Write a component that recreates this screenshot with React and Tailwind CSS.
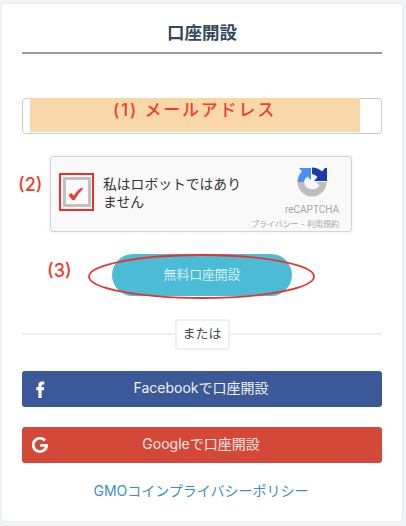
export default function App() {
  const font = { fontFamily: '"Inter", "Noto Sans CJK JP", sans-serif' };
  return (
    <div className="h-[526px] w-[406px] bg-[#f2f3f5] pt-[4px] pl-[2px] overflow-hidden" style={font}>
      <div className="w-[400px] h-[517px] bg-white rounded-[4px] shadow-[0_0_3px_rgba(0,0,0,0.08)] px-[20px] flex flex-col">
        <h1 className="h-[50px] border-b-2 border-[#999999] text-center text-[17.5px] leading-[24px] pt-[17px] font-bold text-[#34495e] shrink-0">
          口座開設
        </h1>

        <div className="relative mt-[44px] h-[36px] border border-[#cccccc] rounded-[4px] bg-white shrink-0">
          <div className="absolute left-[7px] top-[-1px] w-[330px] h-[34px] bg-[#f8d8a8] flex justify-center text-[#ee3d30] text-[17px] leading-[24px] font-medium tracking-[1.8px]">
            <span className="mr-[1px]">(1) メールアドレス</span>
          </div>
        </div>

        <div className="relative mt-[22px] ml-[28px] w-[302px] h-[76px] border border-[#d3d3d3] rounded-[3px] bg-[#f9f9f9] shadow-[0_0_4px_rgba(0,0,0,0.08)] flex shrink-0">
          <span className="absolute left-[-33px] top-[16px] text-[#ee3d30] text-[18px] font-medium leading-[24px]">(2)</span>
          <div className="mt-[16px] ml-[8px] w-[35px] h-[38px] border-2 border-[#ee2f2a] flex items-center justify-center shrink-0">
            <div className="w-[28px] h-[30px] border-[3px] border-[#c1c1c1] bg-[#fafafa] flex items-center justify-center">
              <svg className="mt-[3px] mr-[2px]" width="17" height="15" viewBox="0 0 17 16">
                <path d="M1 9.5 L4.2 7.5 L6.5 10.5 Q10 4.5 15.5 1.5 L16.5 3 Q11 8.5 7.5 15 L5 15 Z" fill="#ee3a30" />
              </svg>
            </div>
          </div>
          <div className="ml-[9px] mt-[18px] w-[142px] text-[13.8px] leading-[18px] text-[#333333]">
            私はロボットではありません
          </div>
          <div className="absolute right-[24px] top-[10px] w-[30px] h-[30px]">
            <svg width="30" height="30" viewBox="0 0 30 30">
              <path d="M0.5 15 A14.5 14.5 0 0 0 29.5 15 L19 15 L22.5 18.5 A8.5 8.5 0 0 1 7 15 Z" fill="#bdbdbd" />
              <path d="M0.5 15 A14.5 14.5 0 0 1 5 4.5 L2 1 H14 V13 L10.5 9.5 Q7.5 11.5 7 15 Z" fill="#4d90f5" />
              <path d="M15 0.5 A14.5 14.5 0 0 1 25 4.5 L28 1 H30 V14 H17 L20.5 10 A8.5 8.5 0 0 0 15 7 Z" fill="#1c3aa9" />
            </svg>
          </div>
          <div className="absolute right-[12px] top-[47px] text-[10px] leading-[12px] text-[#a6a6a6]" style={{ fontFamily: 'Roboto, sans-serif' }}>
            reCAPTCHA
          </div>
          <div className="absolute right-[12px] top-[62px] text-[8px] leading-[10px] text-[#a6a6a6]">
            プライバシー - 利用規約
          </div>
        </div>

        <div className="relative mt-[22px] h-[42px] shrink-0 flex justify-center">
          <span className="absolute left-[25px] top-[5px] text-[#ee3d30] text-[18px] font-medium leading-[24px]">(3)</span>
          <button className="w-[180px] h-[42px] rounded-[21px] bg-[#4cbbd6] text-[#d5f0f6] text-[12.8px]">
            無料口座開設
          </button>
          <svg className="absolute left-[66px] top-[-1px]" width="228" height="48" viewBox="0 0 228 48">
            <ellipse cx="113.5" cy="23.5" rx="112.5" ry="21.5" fill="none" stroke="#e8332c" strokeWidth="1.8" />
          </svg>
        </div>

        <div className="relative mt-[37px] h-[2px] bg-[#eeeeee] shrink-0 flex justify-center items-center">
          <span className="w-[55px] h-[31px] bg-white border-2 border-[#eff0f1] rounded-[2px] flex items-center justify-center text-[13px] text-[#444b52] z-10">
            または
          </span>
        </div>

        <div className="relative mt-[36px] h-[36px] rounded-[3px] bg-[#3b5998] text-[#eef1f7] text-[14px] flex items-center justify-center pb-[3px] shrink-0">
          <svg className="absolute left-[14px] top-[10px]" width="9" height="17" viewBox="0 0 9 17">
            <path d="M2.4 17 V9.3 H0.3 V6.2 H2.4 V4 Q2.4 0.5 6 0.5 H8.3 V3.5 H6.8 Q5.6 3.5 5.6 4.7 V6.2 H8.3 L7.9 9.3 H5.6 V17 Z" fill="#ffffff" />
          </svg>
          <span className="ml-[-2px]">Facebookで口座開設</span>
        </div>

        <div className="relative mt-[20px] h-[36px] rounded-[3px] bg-[#d34836] text-[#fbe9e6] text-[14px] flex items-center justify-center pb-[3px] shrink-0">
          <svg className="absolute left-[10px] top-[10px]" width="16" height="16" viewBox="0 0 16 16">
            <path d="M13 3.5 A6.7 6.7 0 1 0 14.6 8.3 H8.2" fill="none" stroke="#ffffff" strokeWidth="2.8" />
          </svg>
          <span className="ml-[-2px]">Googleで口座開設</span>
        </div>

        <a className="mt-[18px] mr-[2px] text-center text-[14px] leading-[20px] text-[#3b8fc4]">GMOコインプライバシーポリシー</a>
      </div>
    </div>
  );
}
